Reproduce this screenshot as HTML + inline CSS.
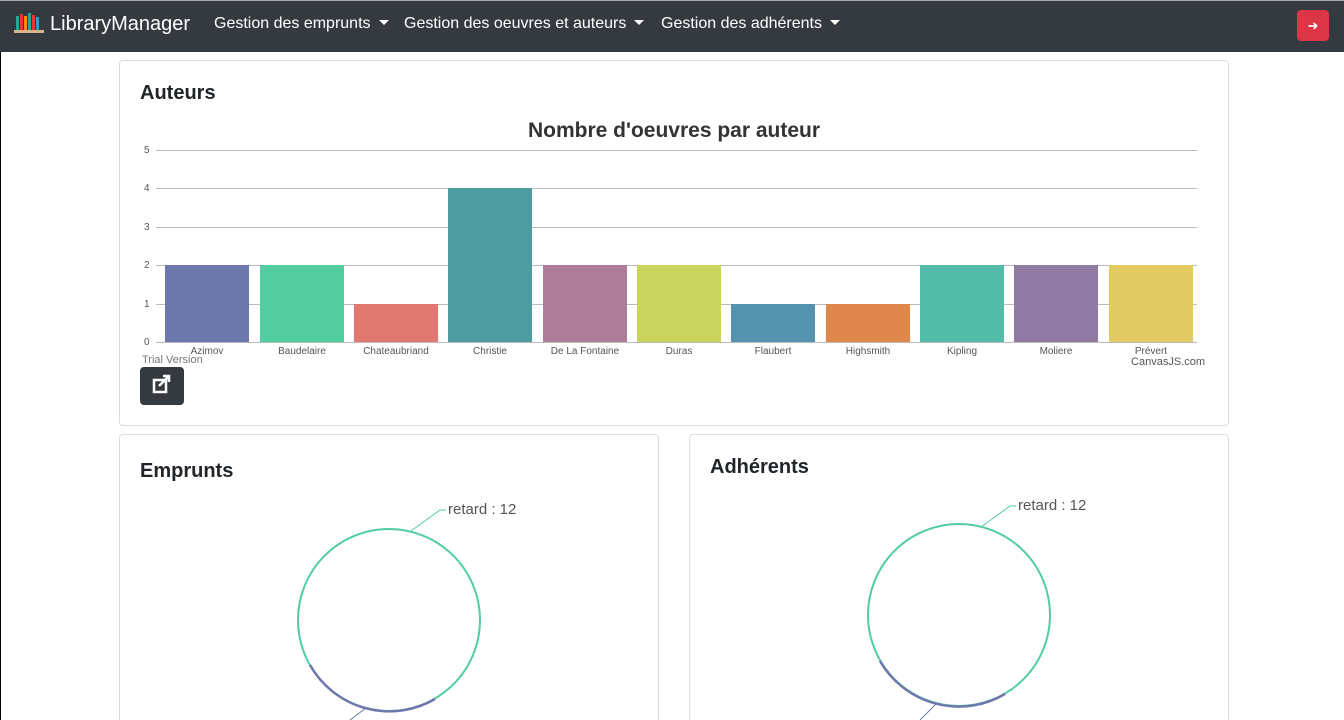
<!DOCTYPE html>
<html style="overflow:hidden;height:720px"><head><meta charset="utf-8"><style>
body{margin:0;width:1344px;height:720px;overflow:hidden;background:#fff;font-family:"Liberation Sans",sans-serif;position:relative}
.nav{position:absolute;left:0;top:0;width:1344px;height:52px;background:#343a40;border-top:1px solid #aaa;box-sizing:border-box}
.nav span{position:absolute;color:#fff;font-size:16px;top:14px}
.caret{display:inline-block;border-top:5px solid #fff;border-left:5px solid transparent;border-right:5px solid transparent;margin-left:8px;vertical-align:3px}
.card{position:absolute;border:1px solid #ddd;border-radius:4px;background:#fff}
h5{position:absolute;margin:0;font-size:20px;font-weight:bold;color:#212529}
</style></head><body>
<div style="position:absolute;left:0;top:0;width:1px;height:720px;background:#000"></div>
<div class="nav">
<svg style="position:absolute;left:14px;top:11px" width="30" height="24"><rect x="2" y="4" width="3" height="14" fill="#2a9"/><rect x="6" y="2" width="3" height="16" fill="#e33"/><rect x="10" y="4" width="3" height="14" fill="#f80"/><rect x="14" y="1" width="3" height="17" fill="#2a9"/><rect x="18" y="3" width="3" height="15" fill="#e33"/><rect x="22" y="5" width="3" height="13" fill="#39c"/><rect x="0" y="18" width="30" height="3" fill="#d9b38c"/></svg>
<span style="left:50px;top:12px;font-size:20px">LibraryManager</span>
<span style="left:214px">Gestion des emprunts<i class="caret"></i></span>
<span style="left:404px">Gestion des oeuvres et auteurs<i class="caret"></i></span>
<span style="left:661px">Gestion des adhérents<i class="caret"></i></span>
<div style="position:absolute;left:1297px;top:9px;width:32px;height:31px;background:#dc3545;border-radius:4px;color:#fff;font-size:13px;text-align:center;line-height:31px">➜</div>
</div>
<div class="card" style="left:119px;top:60px;width:1108px;height:364px"></div>
<h5 style="left:140px;top:82px">Auteurs</h5>
<svg style="position:absolute;left:120px;top:110px" width="1100" height="260" font-family="Liberation Sans" font-size="10" fill="#555">
<text x="554" y="27" text-anchor="middle" font-size="21" font-weight="bold" fill="#333">Nombre d'oeuvres par auteur</text>
<g stroke="#bbb" stroke-width="1">
<line x1="36" y1="40.5" x2="1077" y2="40.5"/><line x1="36" y1="78.5" x2="1077" y2="78.5"/><line x1="36" y1="117.5" x2="1077" y2="117.5"/><line x1="36" y1="155.5" x2="1077" y2="155.5"/><line x1="36" y1="194.5" x2="1077" y2="194.5"/><line x1="36" y1="232.5" x2="1077" y2="232.5"/></g>
<text x="24" y="43">5</text><text x="24" y="81">4</text><text x="24" y="120">3</text><text x="24" y="158">2</text><text x="24" y="197">1</text><text x="24" y="235">0</text>
<rect x="45" y="155" width="84" height="77" fill="#6d78ad"/>
<rect x="140" y="155" width="84" height="77" fill="#51cda0"/>
<rect x="234" y="194" width="84" height="38" fill="#df7970"/>
<rect x="328" y="78" width="84" height="154" fill="#4c9ca0"/>
<rect x="423" y="155" width="84" height="77" fill="#ae7d99"/>
<rect x="517" y="155" width="84" height="77" fill="#c9d45c"/>
<rect x="611" y="194" width="84" height="38" fill="#5592ad"/>
<rect x="706" y="194" width="84" height="38" fill="#df874d"/>
<rect x="800" y="155" width="84" height="77" fill="#52bca8"/>
<rect x="894" y="155" width="84" height="77" fill="#8e7aa3"/>
<rect x="989" y="155" width="84" height="77" fill="#e3cb64"/>
<g text-anchor="middle"><text x="87" y="244">Azimov</text><text x="182" y="244">Baudelaire</text><text x="276" y="244">Chateaubriand</text><text x="370" y="244">Christie</text><text x="465" y="244">De La Fontaine</text><text x="559" y="244">Duras</text><text x="653" y="244">Flaubert</text><text x="748" y="244">Highsmith</text><text x="842" y="244">Kipling</text><text x="936" y="244">Moliere</text><text x="1031" y="244">Prévert</text></g>
<text x="22" y="253" fill="#777" font-size="11">Trial Version</text>
<text x="1085" y="255" text-anchor="end" font-size="11">CanvasJS.com</text>
</svg>
<div style="position:absolute;left:140px;top:367px;width:44px;height:38px;background:#343a40;border-radius:4px"><svg width="44" height="38"><rect x="14" y="13" width="12" height="12" fill="none" stroke="#fff" stroke-width="2.5"/><path d="M19 19 L29 9 M23 9 H29 V15" stroke="#fff" stroke-width="2.5" fill="none"/></svg></div>
<div class="card" style="left:119px;top:434px;width:538px;height:300px"></div>
<div class="card" style="left:689px;top:434px;width:538px;height:300px"></div>
<h5 style="left:140px;top:460px">Emprunts</h5>
<h5 style="left:710px;top:456px">Adhérents</h5>
<svg style="position:absolute;left:0;top:0" width="1344" height="720" font-family="Liberation Sans" font-size="15" fill="#555">
<circle cx="389" cy="620" r="91" fill="none" stroke="#51cda0" stroke-width="2"/>
<path d="M310 665 A91 91 0 0 0 435 699" fill="none" stroke="#6d78ad" stroke-width="2.5"/>
<path d="M411 531 L440 510 H446" stroke="#51cda0" fill="none"/>
<path d="M366 708 L350 720" stroke="#6d78ad"/>
<text x="448" y="514">retard : 12</text>
<circle cx="959" cy="615" r="91" fill="none" stroke="#51cda0" stroke-width="2"/>
<path d="M880 661 A91 91 0 0 0 1005 694" fill="none" stroke="#6d78ad" stroke-width="2.5"/>
<path d="M981 527 L1010 506 H1016" stroke="#51cda0" fill="none"/>
<path d="M936 704 L920 720" stroke="#6d78ad"/>
<text x="1018" y="510">retard : 12</text>
</svg>
</body></html>
